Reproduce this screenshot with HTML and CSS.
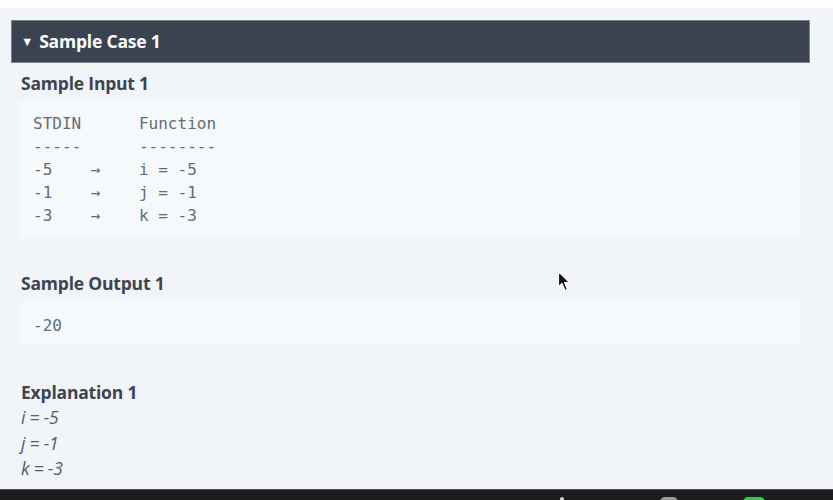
FILE: index.html
```html
<!DOCTYPE html>
<html>
<head>
<meta charset="utf-8">
<link rel="stylesheet" href="styles.css">
</head>
<body>
<div class="top-strip"></div>
<main class="page">
  <div class="case-header"><span class="caret">▼</span>Sample Case 1</div>
  <section class="case-body">
    <h3 class="title first">Sample Input 1</h3>
    <pre class="code">STDIN      Function
-----      --------
-5    →    i = -5
-1    →    j = -1
-3    →    k = -3</pre>
    <h3 class="title out">Sample Output 1</h3>
    <pre class="code short">-20</pre>
    <h3 class="title expl">Explanation 1</h3>
    <div class="explain">
      <div>i = -5</div>
      <div>j = -1</div>
      <div>k = -3</div>
    </div>
  </section>
  <svg class="cursor" width="16" height="24" viewBox="0 0 16 24">
    <path d="M1.5 1.5 L1.5 17 L5 13.5 L8 20.5 L10.5 19.5 L7.6 12.6 L12.5 12.6 Z" fill="#111" stroke="#fff" stroke-width="1.2" stroke-linejoin="round"/>
  </svg>
</main>
<footer class="dock">
  <span class="dock-item arrow"></span>
  <span class="dock-item grey"></span>
  <span class="dock-item green"></span>
</footer>
</body>
</html>
```
FILE: styles.css
```css
html, body {
  margin: 0;
  padding: 0;
}
body {
  background: #ffffff;
  width: 833px;
  height: 500px;
  overflow: hidden;
  font-family: "Open Sans", "Noto Sans", sans-serif;
}
.top-strip {
  height: 8px;
  background: #ffffff;
}
.page {
  position: relative;
  height: 481px;
  background: #f1f4f8;
  padding: 12px 23px 0 11px;
  box-sizing: border-box;
}
.case-header {
  height: 43px;
  box-sizing: border-box;
  background: #3a434f;
  border: 1px solid #7b828c;
  color: #ffffff;
  font-weight: 700;
  font-size: 17.5px;
  line-height: 40px;
  padding-left: 9px;
  letter-spacing: -0.2px;
}
.caret {
  display: inline-block;
  font-size: 12.5px;
  position: relative;
  top: -2px;
  margin-right: 6px;
}
.case-body {
  padding: 0 10px 0 8px;
}
.title {
  margin: 0;
  font-size: 17.5px;
  line-height: 24px;
  font-weight: 700;
  color: #3d4450;
  padding-left: 2px;
  letter-spacing: -0.2px;
}
.title.first { margin-top: 8px; }
.title.out { margin-top: 33px; }
.title.expl { margin-top: 35px; }
.code {
  margin: 5px 0 0 0;
  background: #f6f9fc;
  padding: 12px 14px 11px;
  font-family: "DejaVu Sans Mono", "Liberation Mono", monospace;
  font-size: 16px;
  line-height: 23px;
  color: #626c75;
}
.code.short {
  margin-top: 7px;
  padding: 12px 14px 8px;
}
.explain {
  font-style: italic;
  font-size: 17.5px;
  line-height: 25.5px;
  color: #555c66;
  padding-left: 2px;
  margin-top: 1px;
  letter-spacing: -0.2px;
}
.cursor {
  position: absolute;
  left: 557px;
  top: 262px;
}
.dock {
  height: 11px;
  box-sizing: border-box;
  background: #1c1c1c;
  border-top: 1px solid #4d4f52;
  display: flex;
  align-items: flex-start;
  overflow: hidden;
  padding-left: 560px;
}
.dock-item {
  display: block;
  margin-top: 7px;
}
.dock-item.arrow {
  width: 4px;
  height: 4px;
  background: #cfcfcf;
  border-radius: 2px 2px 0 0;
}
.dock-item.grey {
  width: 18px;
  height: 10px;
  background: #9a9a9a;
  border-radius: 5px;
  margin-left: 96px;
}
.dock-item.green {
  width: 22px;
  height: 10px;
  background: #2ecc40;
  border-radius: 5px;
  margin-left: 65px;
}
```
